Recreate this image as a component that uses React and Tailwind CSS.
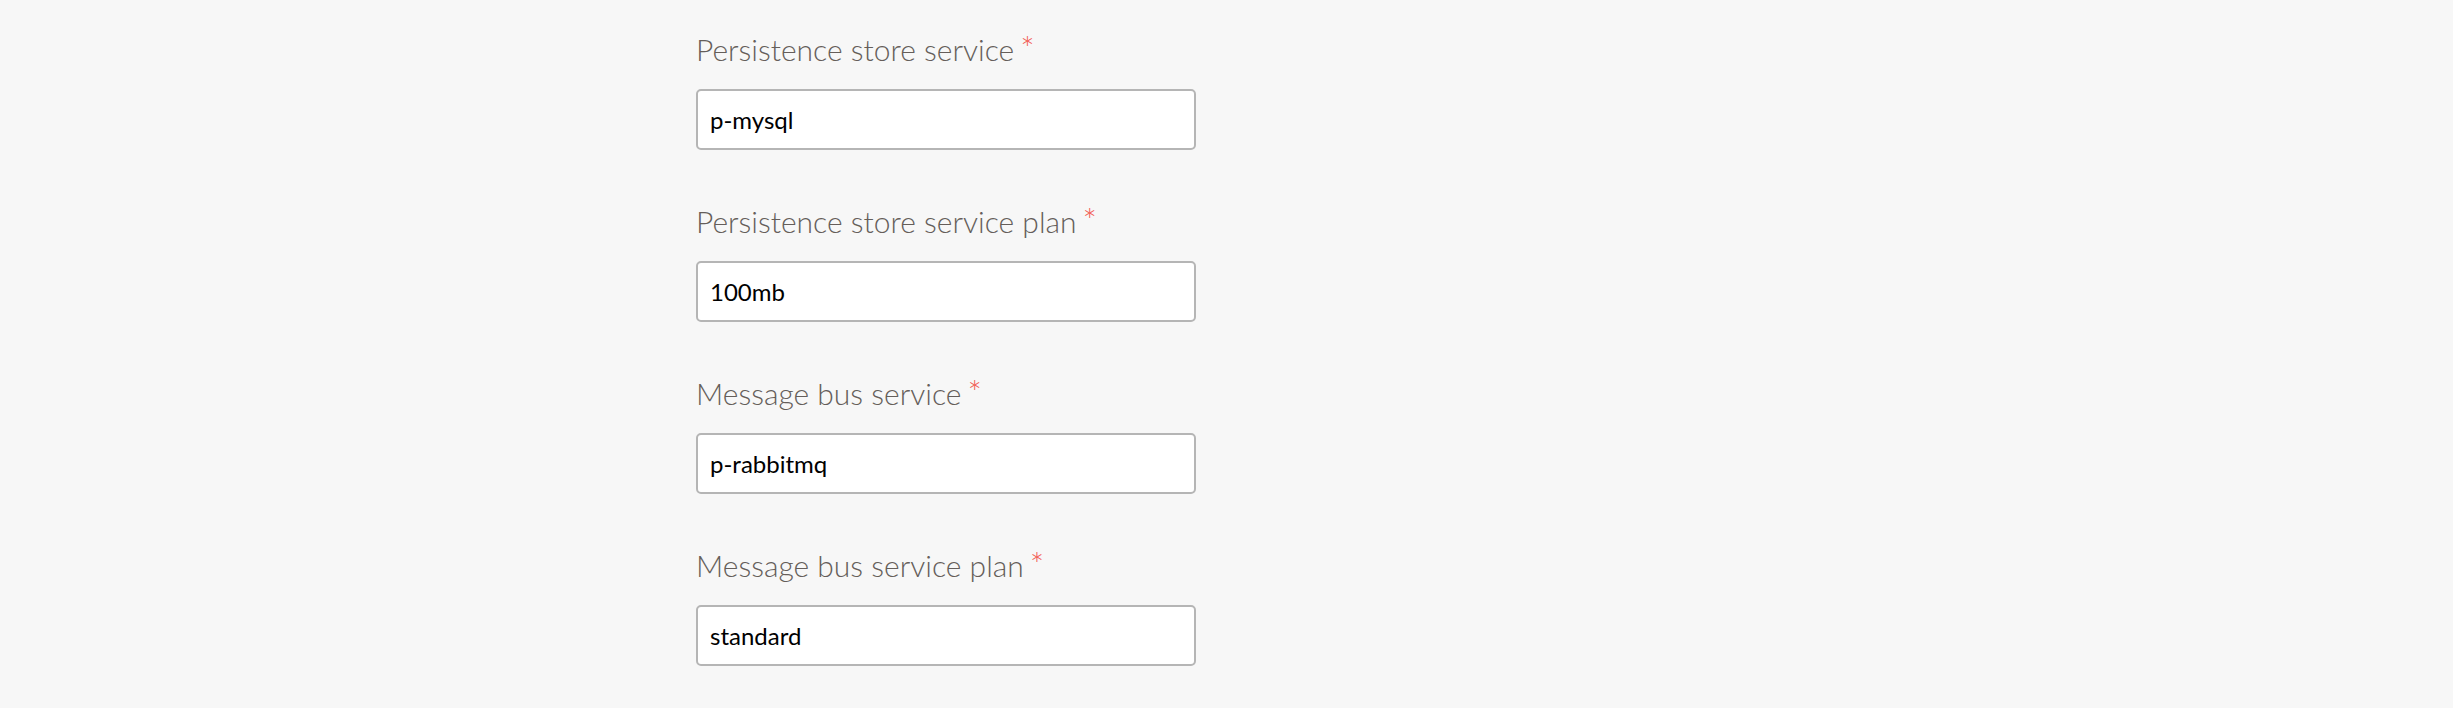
import React from 'react';

const fields = [
  { label: 'Persistence store service', value: 'p-mysql' },
  { label: 'Persistence store service plan', value: '100mb' },
  { label: 'Message bus service', value: 'p-rabbitmq' },
  { label: 'Message bus service plan', value: 'standard' },
];

const Field = ({ label, value }) => (
  <div className="flex flex-col mb-[51px]">
    <label className="h-[40px] leading-[40px] text-[30px] font-light text-[#655e5a] mb-[20px]">
      {label}
      <span className="text-[#f2574f] ml-[6px] text-[34px] leading-none">*</span>
    </label>
    <input
      readOnly
      value={value}
      className="h-[61px] w-[500px] bg-white border-2 border-[#b5b5b5] rounded-[5px] px-[12px] text-[24px] text-black outline-none font-['Lato',sans-serif]"
    />
  </div>
);

const App = () => {
  return (
    <div className="min-h-screen w-full bg-[#f7f7f7] font-['Lato','Open_Sans',sans-serif]">
      <div className="pl-[696px] pt-[29px]">
        {fields.map((f) => (
          <Field key={f.label} label={f.label} value={f.value} />
        ))}
      </div>
    </div>
  );
};

export default App;
